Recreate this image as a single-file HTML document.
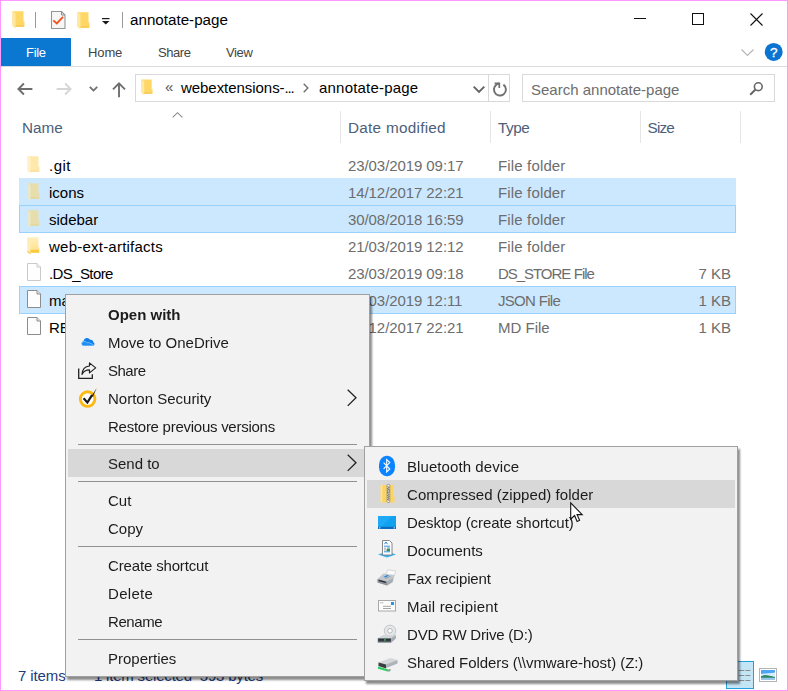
<!DOCTYPE html>
<html lang="en">
<head>
<meta charset="utf-8">
<title>annotate-page</title>
<style>
html,body{margin:0;padding:0;}
body{width:788px;height:691px;overflow:hidden;background:#fff;position:relative;
 font-family:"Liberation Sans",sans-serif;font-size:15px;color:#000;}
#win{position:absolute;left:0;top:0;width:786px;height:689px;border:1px solid #ff99ff;background:#fff;}
.abs{position:absolute;}
.t{position:absolute;white-space:nowrap;line-height:20px;height:20px;}
svg{position:absolute;overflow:visible;}
.menu{position:absolute;background:#f2f2f2;border:1px solid #a0a0a0;box-sizing:border-box;box-shadow:2px 3px 2px rgba(0,0,0,.45);}
</style>
</head>
<body>
<div id="win"></div>
<svg width="0" height="0" style="left:0;top:0"><defs><linearGradient id="fg" x1="0" y1="0" x2="0" y2="1"><stop offset="0" stop-color="#fff0bf"/><stop offset="1" stop-color="#ffdf85"/></linearGradient></defs></svg>

<!-- ===== title bar ===== -->
<svg style="left:12px;top:11px" width="13" height="18" viewBox="0 0 13 18">
 <path d="M0.500 0.300h11v10.200h1v5.200h-9.500l-2.500 -1.500z" fill="#ffd767"/>
 <path d="M0.500 0.300l3 1.900v15.300l-3 -2.200z" fill="#ffe8a0"/>
 <path d="M3.500 14.300h8.500v1.400h-8.500z" fill="#f5c84e"/>
</svg>
<div class="abs" style="left:35px;top:12px;width:1px;height:16px;background:#9a9a9a;"></div>
<svg style="left:51px;top:11px" width="15" height="18" viewBox="0 0 15 18">
 <path d="M0.500 0.500h10l3.500 3.500v13.500h-13.500z" fill="#f6f6f6" stroke="#959595" stroke-width="1.100"/>
 <path d="M10.500 0.500v3.500h3.500" fill="none" stroke="#8f8f8f" stroke-width="1"/>
 <path d="M2.300 9.300l3.500 3.100l6.200 -6.500" fill="none" stroke="#f7501c" stroke-width="1.800"/>
</svg>
<svg style="left:77px;top:12px" width="13" height="18" viewBox="0 0 13 18">
 <path d="M0.500 0.300h11v10.200h1v5.200h-9.500l-2.500 -1.500z" fill="#ffd767"/>
 <path d="M0.500 0.300l3 1.900v15.300l-3 -2.200z" fill="#ffe8a0"/>
 <path d="M3.500 14.300h8.500v1.400h-8.500z" fill="#f5c84e"/>
</svg>
<svg style="left:102px;top:18px" width="8" height="7" viewBox="0 0 8 7">
 <rect x="0" y="0" width="7.500" height="1.200" fill="#1a1a1a"/>
 <path d="M0 3h7.500l-3.750 3.600z" fill="#1a1a1a"/>
</svg>
<div class="abs" style="left:122px;top:12px;width:1px;height:16px;background:#9a9a9a;"></div>
<div class="t" style="left:130px;top:10px;font-size:15.2px;color:#000;">annotate-page</div>

<!-- window controls -->
<div class="abs" style="left:634px;top:18px;width:12px;height:1px;background:#111;"></div>
<div class="abs" style="left:692px;top:13px;width:10px;height:10px;border:1px solid #111"></div>
<svg style="left:750px;top:12.700px" width="13" height="13" viewBox="0 0 13 13">
 <path d="M0.500 0.500l12 12M12.500 0.500l-12 12" stroke="#111" stroke-width="1.100" fill="none"/>
</svg>

<!-- ===== ribbon tabs ===== -->
<div class="abs" style="left:1px;top:38px;width:70px;height:28px;background:#0a78d0;"></div>
<div class="t" style="left:26px;top:43px;font-size:13px;color:#fff;letter-spacing:-0.3px;">File</div>
<div class="t" style="left:88px;top:43px;font-size:13px;color:#444;letter-spacing:-0.12px;">Home</div>
<div class="t" style="left:158px;top:43px;font-size:13px;color:#444;letter-spacing:-0.44px;">Share</div>
<div class="t" style="left:226px;top:43px;font-size:13px;color:#444;letter-spacing:-0.37px;">View</div>
<div class="abs" style="left:1px;top:66px;width:786px;height:1px;background:#dadbdc;"></div>
<svg style="left:741.400px;top:48.600px" width="13" height="8" viewBox="0 0 13 8">
 <path d="M0.500 0.500l6 6l6 -6" stroke="#b5b5b5" stroke-width="1.200" fill="none"/>
</svg>
<svg style="left:764px;top:43px" width="18" height="18" viewBox="0 0 18 18">
 <circle cx="9.700" cy="8.900" r="9" fill="#0a74d0"/>
 <text x="9.700" y="13.800" text-anchor="middle" font-family="Liberation Sans, sans-serif" font-size="13.500" fill="#fff" stroke="#fff" stroke-width="0.300">?</text>
</svg>

<!-- ===== nav bar ===== -->
<svg style="left:17px;top:82px" width="16" height="14" viewBox="0 0 16 14">
 <path d="M15.400 7h-13.600M6.900 1.500l-5.500 5.500l5.500 5.500" stroke="#6e6e6e" stroke-width="1.900" fill="none"/>
</svg>
<svg style="left:55.600px;top:82px" width="16" height="14" viewBox="0 0 16 14">
 <path d="M0.600 7h13.600M9.100 1.500l5.500 5.500l-5.500 5.500" stroke="#d6d6d6" stroke-width="1.900" fill="none"/>
</svg>
<svg style="left:89px;top:86px" width="9" height="6" viewBox="0 0 9 6">
 <path d="M0.800 0.900l3.700 3.700l3.700 -3.700" stroke="#6e6e6e" stroke-width="1.800" fill="none"/>
</svg>
<svg style="left:112px;top:81px" width="14" height="17" viewBox="0 0 14 17">
 <path d="M7 16.200v-13.800M1 8.300l6 -6l6 6" stroke="#6e6e6e" stroke-width="1.900" fill="none"/>
</svg>
<div class="abs" style="left:135px;top:74px;width:375px;height:28px;border:1px solid #d9d9d9;box-sizing:border-box;background:#fff"></div>
<svg style="left:141px;top:79px" width="12" height="17" viewBox="0 0 13 18">
 <path d="M0.500 0.300h11v10.200h1v5.200h-9.500l-2.500 -1.500z" fill="#ffd767"/>
 <path d="M0.500 0.300l3 1.900v15.300l-3 -2.200z" fill="#ffe8a0"/>
 <path d="M3.500 14.300h8.500v1.400h-8.500z" fill="#f5c84e"/>
</svg>
<div class="t" style="left:165px;top:77px;font-size:15px;color:#555;">«</div>
<div class="t" style="left:181px;top:78px;font-size:15px;color:#000;letter-spacing:-0.05px;">webextensions-<span style="letter-spacing:-1.2px">...</span></div>
<svg style="left:303px;top:83px" width="6" height="10" viewBox="0 0 6 10">
 <path d="M0.700 0.700l4.200 4.300l-4.200 4.300" stroke="#6b6b6b" stroke-width="1.300" fill="none"/>
</svg>
<div class="t" style="left:319px;top:78px;font-size:15px;color:#000;letter-spacing:0.2px;">annotate-page</div>
<svg style="left:473px;top:86px" width="12" height="7" viewBox="0 0 12 7">
 <path d="M0.700 0.700l5.300 5.300l5.300 -5.300" stroke="#606060" stroke-width="1.800" fill="none"/>
</svg>
<div class="abs" style="left:488px;top:75px;width:1px;height:26px;background:#d9d9d9;"></div>
<svg style="left:492px;top:81px" width="16" height="16" viewBox="0 0 16 16">
 <path d="M11.400 3.600a6 6 0 1 1 -4.200 -1.050" stroke="#707070" stroke-width="1.900" fill="none"/>
 <path d="M2.600 2.300h4.700v4.600" stroke="#707070" stroke-width="1.700" fill="none"/>
</svg>
<div class="abs" style="left:522px;top:74px;width:253px;height:28px;border:1px solid #d9d9d9;box-sizing:border-box;background:#fff"></div>
<div class="t" style="left:531px;top:79.5px;font-size:15px;color:#6d6d6d;">Search annotate-page</div>
<svg style="left:749px;top:81px" width="15" height="15" viewBox="0 0 15 15">
 <circle cx="9.300" cy="5.700" r="3.900" stroke="#666" stroke-width="1.600" fill="none"/>
 <path d="M6.500 8.500l-5.300 5.300" stroke="#666" stroke-width="2" fill="none"/>
</svg>

<!-- ===== column headers ===== -->
<svg style="left:172px;top:112px" width="11" height="6" viewBox="0 0 11 6">
 <path d="M0.700 5.300l4.800 -4.600l4.800 4.600" stroke="#8a8a8a" stroke-width="1.100" fill="none"/>
</svg>
<div class="t" style="left:22px;top:118px;font-size:15.3px;color:#4c607a;">Name</div>
<div class="t" style="left:348px;top:118px;font-size:15.3px;color:#4c607a;letter-spacing:0.27px;">Date modified</div>
<div class="t" style="left:498px;top:118px;font-size:15.3px;color:#4c607a;letter-spacing:-0.5px;">Type</div>
<div class="t" style="left:647.5px;top:118px;font-size:15.3px;color:#4c607a;letter-spacing:-0.8px;">Size</div>
<div class="abs" style="left:340px;top:111px;width:1px;height:32px;background:#e5e5e5;"></div>
<div class="abs" style="left:490px;top:111px;width:1px;height:32px;background:#e5e5e5;"></div>
<div class="abs" style="left:640px;top:111px;width:1px;height:32px;background:#e5e5e5;"></div>
<div class="abs" style="left:740px;top:111px;width:1px;height:32px;background:#e5e5e5;"></div>

<!-- ===== file rows ===== -->
<div class="abs" style="left:19px;top:178px;width:717px;height:28px;background:#cce8ff;"></div>
<div class="abs" style="left:19px;top:205px;width:717px;height:28px;background:#cce8ff;box-sizing:border-box;border:1px solid #99d1ff;"></div>
<div class="abs" style="left:19px;top:286px;width:717px;height:28px;background:#cce8ff;box-sizing:border-box;border:1px solid #99d1ff;"></div>
<svg style="left:27px;top:156px;opacity:0.55" width="13" height="18" viewBox="0 0 13 18">
 <path d="M0.500 0.300h11v10.200h1v5.200h-9.500l-2.500 -1.500z" fill="#ffd767"/>
 <path d="M0.500 0.300l3 1.900v15.300l-3 -2.200z" fill="#ffe8a0"/>
 <path d="M3.500 14.300h8.500v1.400h-8.500z" fill="#f5c84e"/>
</svg>
<div class="t" style="left:49px;top:156px;font-size:15px;color:#000;letter-spacing:0.5px;">.git</div>
<div class="t" style="left:348px;top:156px;font-size:15px;color:#6d6d6d;letter-spacing:-0.08px;">23/03/2019 09:17</div>
<div class="t" style="left:498px;top:156px;font-size:15px;color:#6d6d6d;letter-spacing:0.15px;">File folder</div>
<svg style="left:27px;top:183px;opacity:0.55" width="13" height="18" viewBox="0 0 13 18">
 <path d="M0.500 0.300h11v10.200h1v5.200h-9.500l-2.500 -1.500z" fill="#ffd767"/>
 <path d="M0.500 0.300l3 1.900v15.300l-3 -2.200z" fill="#ffe8a0"/>
 <path d="M3.500 14.300h8.500v1.400h-8.500z" fill="#f5c84e"/>
</svg>
<div class="t" style="left:49px;top:183px;font-size:15px;color:#000;">icons</div>
<div class="t" style="left:348px;top:183px;font-size:15px;color:#6d6d6d;letter-spacing:-0.08px;">14/12/2017 22:21</div>
<div class="t" style="left:498px;top:183px;font-size:15px;color:#6d6d6d;letter-spacing:0.15px;">File folder</div>
<svg style="left:27px;top:210px;opacity:0.55" width="13" height="18" viewBox="0 0 13 18">
 <path d="M0.500 0.300h11v10.200h1v5.200h-9.500l-2.500 -1.500z" fill="#ffd767"/>
 <path d="M0.500 0.300l3 1.900v15.300l-3 -2.200z" fill="#ffe8a0"/>
 <path d="M3.500 14.300h8.500v1.400h-8.500z" fill="#f5c84e"/>
</svg>
<div class="t" style="left:49px;top:210px;font-size:15px;color:#000;">sidebar</div>
<div class="t" style="left:348px;top:210px;font-size:15px;color:#6d6d6d;letter-spacing:-0.08px;">30/08/2018 16:59</div>
<div class="t" style="left:498px;top:210px;font-size:15px;color:#6d6d6d;letter-spacing:0.15px;">File folder</div>
<svg style="left:27px;top:237px" width="13" height="18" viewBox="0 0 13 18">
 <path d="M0.500 0.300h11v10.200h1v5.200h-9.500l-2.500 -1.500z" fill="url(#fg)"/>
 <path d="M0.500 0.300l3 1.900v15.300l-3 -2.200z" fill="#ffedb8"/>
 <path d="M3.500 12.800h8.500v2.900h-8.500z" fill="#f9ca3f"/>
 <path d="M0.500 13.500l3 2v2l-3 -2.200z" fill="#fbd35a"/>
</svg>
<div class="t" style="left:49px;top:237px;font-size:15px;color:#000;letter-spacing:0.23px;">web-ext-artifacts</div>
<div class="t" style="left:348px;top:237px;font-size:15px;color:#6d6d6d;letter-spacing:-0.08px;">21/03/2019 12:12</div>
<div class="t" style="left:498px;top:237px;font-size:15px;color:#6d6d6d;letter-spacing:0.15px;">File folder</div>
<svg style="left:27px;top:263px;opacity:0.45" width="15" height="18" viewBox="0 0 15 18">
 <path d="M0.500 0.500h9.500l3.500 3.500v13.500h-13z" fill="#fdfdfd" stroke="#8c8c8c" stroke-width="1"/>
 <path d="M10 0.500v3.500h3.500" fill="#e8e8e8" stroke="#8c8c8c" stroke-width="1"/>
</svg>
<div class="t" style="left:49px;top:264px;font-size:15px;color:#000;letter-spacing:-0.6px;">.DS_Store</div>
<div class="t" style="left:348px;top:264px;font-size:15px;color:#6d6d6d;letter-spacing:-0.08px;">23/03/2019 09:18</div>
<div class="t" style="left:498px;top:264px;font-size:15px;color:#6d6d6d;letter-spacing:-1.05px;word-spacing:0.500px;">DS_STORE File</div>
<div class="t" style="left:0px;top:264px;font-size:15px;color:#6d6d6d;left:auto;right:57px;">7 KB</div>
<svg style="left:27px;top:290px" width="15" height="18" viewBox="0 0 15 18">
 <path d="M0.500 0.500h9.500l3.500 3.500v13.500h-13z" fill="#fdfdfd" stroke="#8c8c8c" stroke-width="1"/>
 <path d="M10 0.500v3.500h3.500" fill="#e8e8e8" stroke="#8c8c8c" stroke-width="1"/>
</svg>
<div class="t" style="left:49px;top:291px;font-size:15px;color:#000;">manifest.json</div>
<div class="t" style="left:348px;top:291px;font-size:15px;color:#6d6d6d;letter-spacing:-0.08px;">25/03/2019 12:11</div>
<div class="t" style="left:498px;top:291px;font-size:15px;color:#6d6d6d;letter-spacing:-0.7px;">JSON File</div>
<div class="t" style="left:0px;top:291px;font-size:15px;color:#6d6d6d;left:auto;right:57px;">1 KB</div>
<svg style="left:27px;top:317px" width="15" height="18" viewBox="0 0 15 18">
 <path d="M0.500 0.500h9.500l3.500 3.500v13.500h-13z" fill="#fdfdfd" stroke="#8c8c8c" stroke-width="1"/>
 <path d="M10 0.500v3.500h3.500" fill="#e8e8e8" stroke="#8c8c8c" stroke-width="1"/>
</svg>
<div class="t" style="left:49px;top:318px;font-size:15px;color:#000;">README.md</div>
<div class="t" style="left:348px;top:318px;font-size:15px;color:#6d6d6d;letter-spacing:-0.08px;">14/12/2017 22:21</div>
<div class="t" style="left:498px;top:318px;font-size:15px;color:#6d6d6d;">MD File</div>
<div class="t" style="left:0px;top:318px;font-size:15px;color:#6d6d6d;left:auto;right:57px;">1 KB</div>

<!-- ===== status bar ===== -->
<div class="t" style="left:18px;top:665.5px;font-size:15px;color:#1e3c7d;letter-spacing:-0.1px;">7 items</div>
<div class="t" style="left:94px;top:665.5px;font-size:15px;color:#1e3c7d;letter-spacing:-0.2px;">1 item selected&nbsp; 593 bytes</div>
<div class="abs" style="left:726px;top:661px;width:28px;height:28px;box-sizing:border-box;border:1px solid #26a0da;background:#c4e5f6"></div>
<svg style="left:733px;top:668px" width="18" height="14" viewBox="0 0 18 14">
 <path d="M0 2.500h5.300M6.500 2.500h4.800M0 7.500h5.300M6.500 7.500h4.800M0 12.500h5.300M6.500 12.500h4.800" stroke="#8a8a8a" stroke-width="1.100" transform="translate(6,0)"/>
</svg>
<svg style="left:759px;top:668px" width="18" height="14" viewBox="0 0 18 14">
 <rect x="0.500" y="0.500" width="17" height="13" fill="#fff" stroke="#b4b4b4"/>
 <rect x="2" y="2" width="14" height="10" fill="#d6eefb"/>
 <path d="M2 2h14v2.500c-5 1 -9 0.500 -14 1.500z" fill="#4ea5f3"/>
 <path d="M2 8.300c4 -2.500 8 -0.500 14 0.700v1h-14z" fill="#2f8a6b"/>
 <path d="M2 9.800h14v2.200h-14z" fill="#9cc6e8"/>
</svg>

<!-- ===== context menu ===== -->
<div class="menu" style="left:65px;top:294px;width:305px;height:383px"></div>
<div class="abs" style="left:68px;top:449px;width:299px;height:28px;background:#d8d8d8;"></div>
<div class="t" style="left:108px;top:305px;font-size:15px;color:#1c1c1c;font-weight:bold;will-change:transform;">Open with</div>
<div class="t" style="left:108px;top:333px;font-size:15px;color:#1c1c1c;will-change:transform;">Move to OneDrive</div>
<div class="t" style="left:108px;top:361px;font-size:15px;color:#1c1c1c;letter-spacing:-0.5px;will-change:transform;">Share</div>
<div class="t" style="left:108px;top:389px;font-size:15px;color:#1c1c1c;will-change:transform;">Norton Security</div>
<div class="t" style="left:108px;top:417px;font-size:15px;color:#1c1c1c;letter-spacing:-0.26px;will-change:transform;">Restore previous versions</div>
<div class="t" style="left:108px;top:454px;font-size:15px;color:#1c1c1c;will-change:transform;">Send to</div>
<div class="t" style="left:108px;top:491px;font-size:15px;color:#1c1c1c;will-change:transform;">Cut</div>
<div class="t" style="left:108px;top:519px;font-size:15px;color:#1c1c1c;will-change:transform;">Copy</div>
<div class="t" style="left:108px;top:556px;font-size:15px;color:#1c1c1c;letter-spacing:-0.15px;will-change:transform;">Create shortcut</div>
<div class="t" style="left:108px;top:584px;font-size:15px;color:#1c1c1c;letter-spacing:0.3px;will-change:transform;">Delete</div>
<div class="t" style="left:108px;top:612px;font-size:15px;color:#1c1c1c;letter-spacing:-0.4px;will-change:transform;">Rename</div>
<div class="t" style="left:108px;top:649px;font-size:15px;color:#1c1c1c;will-change:transform;">Properties</div>
<div class="abs" style="left:78px;top:444px;width:279px;height:1px;background:#919191;"></div>
<div class="abs" style="left:78px;top:481px;width:279px;height:1px;background:#919191;"></div>
<div class="abs" style="left:78px;top:546px;width:279px;height:1px;background:#919191;"></div>
<div class="abs" style="left:78px;top:639px;width:279px;height:1px;background:#919191;"></div>
<svg style="left:347px;top:388.5px" width="10" height="18" viewBox="0 0 10 18"><path d="M0.700 0.700l8.300 8.100l-8.300 8.100" stroke="#222" stroke-width="1.300" fill="none"/></svg>
<svg style="left:347px;top:453.5px" width="10" height="18" viewBox="0 0 10 18"><path d="M0.700 0.700l8.300 8.100l-8.300 8.100" stroke="#222" stroke-width="1.300" fill="none"/></svg>
<svg style="left:80.300px;top:336.800px" width="15.500" height="9.300" viewBox="0 0 17 11">
 <path d="M4 10.500a3 3 0 0 1 -0.500 -5.900a4.200 4.200 0 0 1 7.800 -1.300a3 3 0 0 1 3.800 2.800a2.300 2.300 0 0 1 -0.600 4.400z" fill="#0f7fe9"/>
 <path d="M2.800 10.500a2.500 2.500 0 0 1 0.300 -4.800a3.200 3.200 0 0 1 4.700 1.300a2 2 0 0 1 2.200 -0.300l5 2.300a2.300 2.300 0 0 1 -0.500 1.500z" fill="#1f8ff5" stroke="#e8f3ff" stroke-width="0.500"/>
</svg>
<svg style="left:78px;top:362px" width="19" height="17" viewBox="0 0 19 17">
 <path d="M0.700 6.500v9.800h13.600v-4" stroke="#222" stroke-width="1.300" fill="none"/>
 <path d="M11.500 0.900l6.200 5l-6.200 5v-3c-4 0 -6 1.500 -7.500 4.500c0.300 -5 3 -8 7.500 -8.400z" stroke="#222" stroke-width="1.200" fill="none" stroke-linejoin="round"/>
</svg>
<svg style="left:79px;top:387px" width="19" height="22" viewBox="0 0 19 22">
 <circle cx="8.600" cy="12.100" r="7.300" stroke="#fdb913" stroke-width="2.900" fill="#fff"/>
 <path d="M4.600 11.200l3.800 4.300l4.600 -7.400" stroke="#1a1a1a" stroke-width="2.200" fill="none" stroke-linejoin="miter"/>
 <path d="M12.300 9.200l5.300 -8l-3.600 8.500z" fill="#3a2a10"/>
 <path d="M16.400 2.900l1.300 -1.900l-0.700 2.200z" fill="#f5a623"/>
</svg>

<!-- ===== send-to submenu ===== -->
<div class="menu" style="left:364px;top:446px;width:374px;height:235px"></div>
<div class="abs" style="left:367px;top:480px;width:368px;height:28px;background:#d8d8d8;"></div>
<div class="t" style="left:407px;top:457px;font-size:15px;color:#1c1c1c;letter-spacing:0.08px;will-change:transform;">Bluetooth device</div>
<div class="t" style="left:407px;top:485px;font-size:15px;color:#1c1c1c;letter-spacing:0.05px;will-change:transform;">Compressed (zipped) folder</div>
<div class="t" style="left:407px;top:513px;font-size:15px;color:#1c1c1c;letter-spacing:-0.07px;will-change:transform;">Desktop (create shortcut)</div>
<div class="t" style="left:407px;top:541px;font-size:15px;color:#1c1c1c;will-change:transform;">Documents</div>
<div class="t" style="left:407px;top:569px;font-size:15px;color:#1c1c1c;letter-spacing:-0.17px;will-change:transform;">Fax recipient</div>
<div class="t" style="left:407px;top:597px;font-size:15px;color:#1c1c1c;letter-spacing:0.2px;will-change:transform;">Mail recipient</div>
<div class="t" style="left:407px;top:625px;font-size:15px;color:#1c1c1c;letter-spacing:-0.2px;will-change:transform;">DVD RW Drive (D:)</div>
<div class="t" style="left:407px;top:653px;font-size:15px;color:#1c1c1c;letter-spacing:-0.06px;will-change:transform;">Shared Folders (\\vmware-host) (Z:)</div>
<svg style="left:379.200px;top:456px" width="16" height="20" viewBox="0 0 16 20">
 <rect x="0" y="-0.200" width="16" height="20.400" rx="7.600" ry="9" fill="#0a84ff"/>
 <path d="M4.600 6.700l6.200 6.300l-3.100 3v-12.400l3.100 3l-6.200 6.300" stroke="#fff" stroke-width="1.100" fill="none"/>
</svg>
<svg style="left:379.500px;top:484px" width="15" height="19" viewBox="0 0 15 19">
 <path d="M0.700 1h12.300v11h1.500v6.500h-13.800z" fill="#fcd462"/>
 <path d="M0.700 1h1.600v17.500h-1.600z" fill="#fde29a"/>
 <rect x="7" y="0.300" width="2.800" height="18.200" rx="0.800" fill="#ececec" stroke="#8a8a8a" stroke-width="0.700"/>
 <path d="M7.400 2.500l2 1l-2 1l2 1M7.400 9.500l2 1l-2 1l2 1l-2 1l2 1l-2 1l2 1" stroke="#5a5a5a" stroke-width="0.700" fill="none"/>
 <rect x="7.500" y="5.800" width="1.800" height="3" fill="#bdbdbd" stroke="#666" stroke-width="0.500"/>
</svg>
<svg style="left:378px;top:516px" width="18" height="13" viewBox="0 0 18 13">
 <rect x="0" y="0" width="18" height="13" fill="#12a1ef"/>
 <path d="M0 0h14l-10 10.500h-4z" fill="#1da9f5"/>
 <rect x="0" y="10.800" width="18" height="2.200" fill="#0c6cc0"/>
 <rect x="1" y="11.400" width="1.400" height="1" fill="#d6ecff"/><rect x="15.600" y="11.400" width="1.400" height="1" fill="#d6ecff"/>
</svg>
<svg style="left:378px;top:540px" width="18" height="18" viewBox="0 0 18 18">
 <path d="M0 14.500l9 3l9 -3l-9 -3z" fill="#35b4f0"/>
 <path d="M4.500 0.500h7l2.500 2.500v12h-9.500z" fill="#fff" stroke="#7a7a7a" stroke-width="0.900"/>
 <path d="M6.500 4.200l1.500 -2.200l1.500 2.200" stroke="#1e86e0" stroke-width="1" fill="none"/>
 <path d="M6 6.200h6M9 8h3M9 9.800h3M6 11.800h6" stroke="#1e86e0" stroke-width="0.900"/>
 <rect x="8.600" y="8.800" width="3.400" height="2.400" fill="#3d8f5a"/>
 <path d="M6 8.200h2M6 10h2" stroke="#888" stroke-width="0.800"/>
</svg>
<svg style="left:377px;top:568.500px" width="20" height="17" viewBox="0 0 20 17">
 <path d="M10.500 0.800l8.300 1.200l-2.200 6l-8 -1.200z" fill="#fcfcfc" stroke="#c2c2c2" stroke-width="0.600"/>
 <path d="M0.500 10l6 -5.500l11 1.500l-1.500 7l-6 3.500l-9.500 -3z" fill="#c3c8cd"/>
 <path d="M0.500 10l9.500 2.500v4l-9.500 -3z" fill="#8b9299"/>
 <path d="M10 12.500l6 -3.500l-0.500 4l-5.500 3.500z" fill="#a7adb4"/>
 <path d="M1.800 11.400l7 2" stroke="#2b2b2b" stroke-width="1.300"/>
 <path d="M6.500 8l3.500 -2l2 0.500l-3.500 2z" fill="#1e86e0"/>
 <path d="M8.500 9.500l5 -2.200" stroke="#8b9299" stroke-width="0.800"/>
</svg>
<svg style="left:378px;top:599.600px" width="18" height="12" viewBox="0 0 18 12">
 <rect x="0.500" y="0.500" width="17" height="10.500" fill="#fdfdfd" stroke="#a8a8a8" stroke-width="1"/>
 <rect x="13" y="2" width="3" height="3" fill="#1e9bf0"/>
 <path d="M2 2.800h3.500" stroke="#b0b0b0" stroke-width="0.900"/>
 <path d="M5 6.300h8M5 8.500h8" stroke="#9a9a9a" stroke-width="0.900"/>
</svg>
<svg style="left:377px;top:624px" width="20" height="19" viewBox="0 0 20 19">
 <circle cx="13" cy="6.800" r="5.700" fill="#e6e8ea" stroke="#b9bdc0" stroke-width="0.800"/>
 <circle cx="13" cy="6.800" r="2.300" fill="#fdfdfd" stroke="#adb1b5" stroke-width="0.900"/>
 <path d="M0.800 14l5.500 -3h12.500v3.500l-4.500 4h-13.500z" fill="#d3d6d9"/>
 <path d="M0.800 14.200h13.500v4.300h-13.500z" fill="#5b6066"/>
 <path d="M1.500 15h12v1.800h-12z" fill="#2e3236"/>
 <path d="M14.300 14.200l4.500 -3.200v3.500l-4.500 4z" fill="#a7acb1"/>
 <rect x="7" y="15.300" width="1.800" height="1.300" fill="#34c759"/>
</svg>
<svg style="left:376.500px;top:656.800px" width="21" height="15" viewBox="0 0 21 15">
 <path d="M1.500 5.500l12 -4.500l7 2l-0.500 3.500l-11 4.500l-7.500 -2z" fill="#d5d8db"/>
 <path d="M1.500 5.500l7.500 2v4l-7.500 -2.500z" fill="#3a3f44"/>
 <path d="M9 7.500l11.500 -4.500v3.500l-11.500 4.500z" fill="#aeb3b8"/>
 <path d="M1 9.500l10.500 3v2.200l-10.500 -3z" fill="#2fce5e"/>
 <path d="M11.500 12.500l2 -0.800v2.200l-2 0.800z" fill="#8c9398"/>
</svg>
<!-- mouse cursor -->
<svg style="left:570px;top:502px" width="13" height="21" viewBox="0 0 13 21">
 <path d="M0.700 0.800v16.400l3.900 -3.700l2.500 5.900l2.500 -1.100l-2.500 -5.700h5.100z" fill="#fff" stroke="#111" stroke-width="1.100" stroke-linejoin="miter"/>
</svg>
</body>
</html>
